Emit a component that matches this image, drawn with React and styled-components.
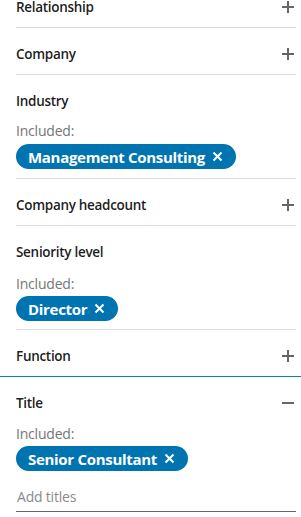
import React from "react";
import styled, { createGlobalStyle } from "styled-components";

const GlobalStyle = createGlobalStyle`
  html, body {
    margin: 0;
    padding: 0;
    background: #fff;
    overflow: hidden;
  }
  body {
    font-family: "Open Sans", "Noto Sans", sans-serif;
    -webkit-font-smoothing: antialiased;
  }
`;

const Panel = styled.div`
  width: 301px;
  margin-top: -19px;
`;

const Section = styled.section`
  margin: 0 5px 0 16px;
  border-bottom: ${props => (props.last ? "none" : "1px solid #dcdcdc")};
  padding-bottom: ${props => props.pad || "0"};
`;

const ActiveSection = styled.section`
  border-top: 1px solid #0084bf;
  padding: 0 5px 0 16px;
`;

const Header = styled.div`
  display: flex;
  align-items: center;
  justify-content: space-between;
  padding: 18px 0 12px;
  height: 16px;
`;

const Heading = styled.h3`
  margin: 0;
  font-size: 13.5px;
  line-height: 16px;
  font-weight: 600;
  color: rgba(0, 0, 0, 0.9);
  letter-spacing: -0.3px;
`;

const Toggle = styled.span`
  display: flex;
  width: 14px;
  height: 14px;
  margin-right: 1px;
  color: #666;
`;

const Label = styled.div`
  font-size: 14px;
  line-height: 20px;
  color: #767676;
  letter-spacing: -0.2px;
  margin-top: ${props => props.gap || "0"};
`;

const Pills = styled.div`
  display: flex;
  flex-wrap: wrap;
  gap: 6px;
  margin-top: ${props => props.gap || "3px"};
`;

const Pill = styled.button`
  display: inline-flex;
  align-items: center;
  gap: 7px;
  height: 25px;
  padding: 0 13px 0 12px;
  border: none;
  border-radius: 13px;
  background: #0073b1;
  color: #fff;
  font-family: inherit;
  font-size: 15px;
  font-weight: 700;
  letter-spacing: -0.3px;
  cursor: pointer;
`;

const Input = styled.input`
  display: block;
  width: 100%;
  box-sizing: border-box;
  margin-top: 12px;
  padding: 4px 0 4px 1px;
  border: none;
  border-bottom: 1px solid #666;
  font-family: inherit;
  font-size: 14px;
  line-height: 20px;
  color: #191919;
  letter-spacing: -0.2px;
  outline: none;
  &::placeholder {
    color: #8a8a8a;
  }
`;

const PlusIcon = () => (
  <svg width="14" height="14" viewBox="0 0 14 14">
    <path d="M7 1v12M1 7h12" stroke="currentColor" strokeWidth="2" />
  </svg>
);

const MinusIcon = () => (
  <svg width="14" height="14" viewBox="0 0 14 14">
    <path d="M1 7h12" stroke="currentColor" strokeWidth="2" />
  </svg>
);

const CloseIcon = () => (
  <svg width="11" height="11" viewBox="0 0 11 11">
    <path d="M1.5 1.5l8 8M9.5 1.5l-8 8" stroke="currentColor" strokeWidth="2" />
  </svg>
);

const Collapsed = ({ title, last }) => (
  <Section last={last}>
    <Header>
      <Heading>{title}</Heading>
      <Toggle>
        <PlusIcon />
      </Toggle>
    </Header>
  </Section>
);

const Expanded = ({ title, items, labelGap, pillGap, pad }) => (
  <Section pad={pad}>
    <Header>
      <Heading>{title}</Heading>
    </Header>
    <Label gap={labelGap}>Included:</Label>
    <Pills gap={pillGap}>
      {items.map(item => (
        <Pill key={item}>
          {item}
          <CloseIcon />
        </Pill>
      ))}
    </Pills>
  </Section>
);

const App = () => (
  <>
    <GlobalStyle />
    <Panel>
      <Collapsed title="Relationship" />
      <Collapsed title="Company" />
      <Expanded title="Industry" items={["Management Consulting"]} pillGap="3px" pad="9px" />
      <Collapsed title="Company headcount" />
      <Expanded title="Seniority level" items={["Director"]} labelGap="2px" pillGap="2px" pad="8px" />
      <Collapsed title="Function" last />
      <ActiveSection>
        <Header>
          <Heading>Title</Heading>
          <Toggle>
            <MinusIcon />
          </Toggle>
        </Header>
        <Label gap="1px">Included:</Label>
        <Pills gap="2px">
          <Pill>
            Senior Consultant
            <CloseIcon />
          </Pill>
        </Pills>
        <Input placeholder="Add titles" />
      </ActiveSection>
    </Panel>
  </>
);

export default App;
